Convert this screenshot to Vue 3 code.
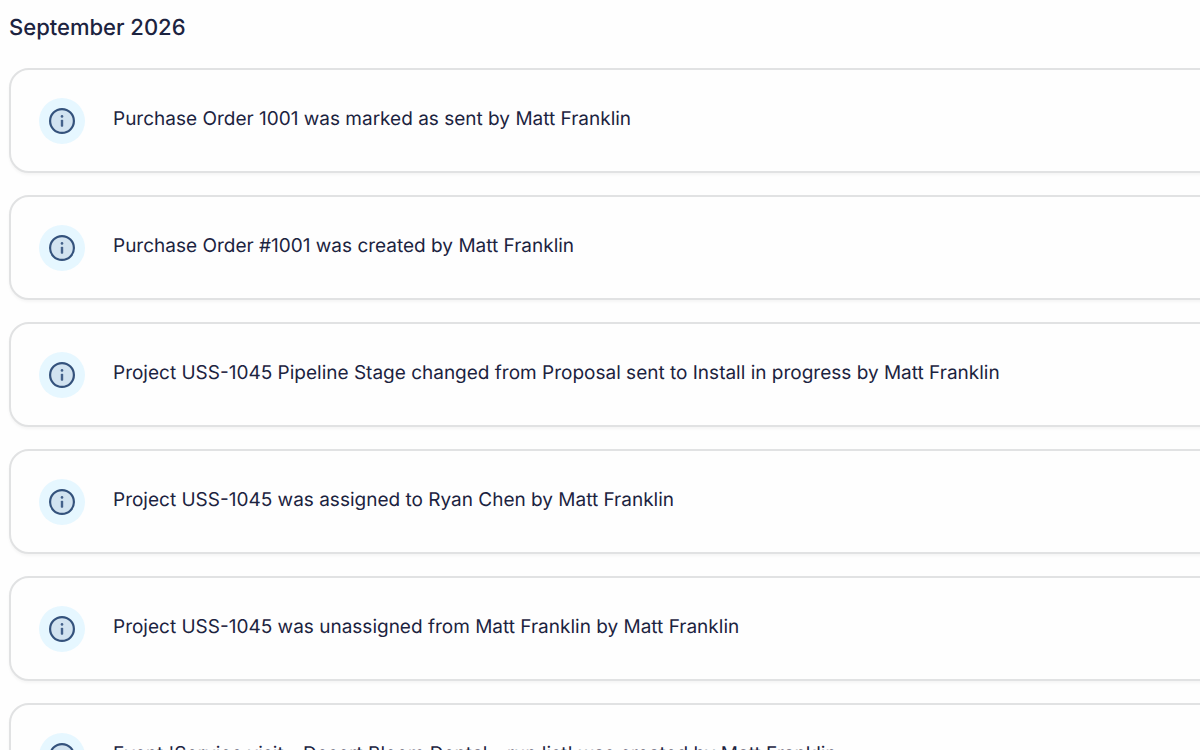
<script setup>
const events = [
  'Purchase Order 1001 was marked as sent by Matt Franklin',
  'Purchase Order #1001 was created by Matt Franklin',
  'Project USS-1045 Pipeline Stage changed from Proposal sent to Install in progress by Matt Franklin',
  'Project USS-1045 was assigned to Ryan Chen by Matt Franklin',
  'Project USS-1045 was unassigned from Matt Franklin by Matt Franklin',
  "Event 'Service visit - Desert Bloom Dental - run list' was created by Matt Franklin",
]
</script>

<template>
  <main class="activity">
    <h2 class="month">September 2026</h2>
    <ul class="list">
      <li v-for="text in events" :key="text" class="card">
        <span class="badge">
          <svg viewBox="0 0 28 28" aria-hidden="true">
            <circle cx="14" cy="14" r="11.9" fill="#d2e3f0" stroke="#34527c" stroke-width="2.2" />
            <circle cx="14" cy="9.4" r="1.3" fill="#44618a" />
            <rect x="12.8" y="12.8" width="2.4" height="7" rx="0.8" fill="#44618a" />
          </svg>
        </span>
        <p class="text">{{ text }}</p>
      </li>
    </ul>
  </main>
</template>

<style>
body {
  margin: 0;
  background: #fefefe;
}

html,
body {
  height: 100%;
  overflow: hidden;
}
</style>

<style scoped>
.activity {
  padding: 12px 0 0 9px;
  font-family: Inter, "Liberation Sans", sans-serif;
  text-rendering: geometricPrecision;
  color: #1c2340;
}

.month {
  margin: 0 0 24px;
  font-size: 22px;
  line-height: 32px;
  font-weight: 500;
}

.list {
  display: flex;
  flex-direction: column;
  gap: 22px;
  margin: 0 -24px 0 0;
  padding: 0;
  list-style: none;
}

.card {
  display: flex;
  align-items: flex-start;
  gap: 28px;
  padding: 28px 28px 27px;
  border: 2px solid #e1e2e3;
  border-radius: 20px;
  background: #fefefe;
  box-shadow: 0 2px 3px rgba(0, 0, 0, 0.04);
}

.badge {
  display: flex;
  align-items: center;
  justify-content: center;
  flex: none;
  width: 46px;
  height: 46px;
  border-radius: 50%;
  background: #e6f7ff;
}

.badge svg {
  width: 28px;
  height: 28px;
}

.text {
  margin: 7px 0 0;
  font-size: 19px;
  line-height: 28px;
  white-space: nowrap;
}
</style>
